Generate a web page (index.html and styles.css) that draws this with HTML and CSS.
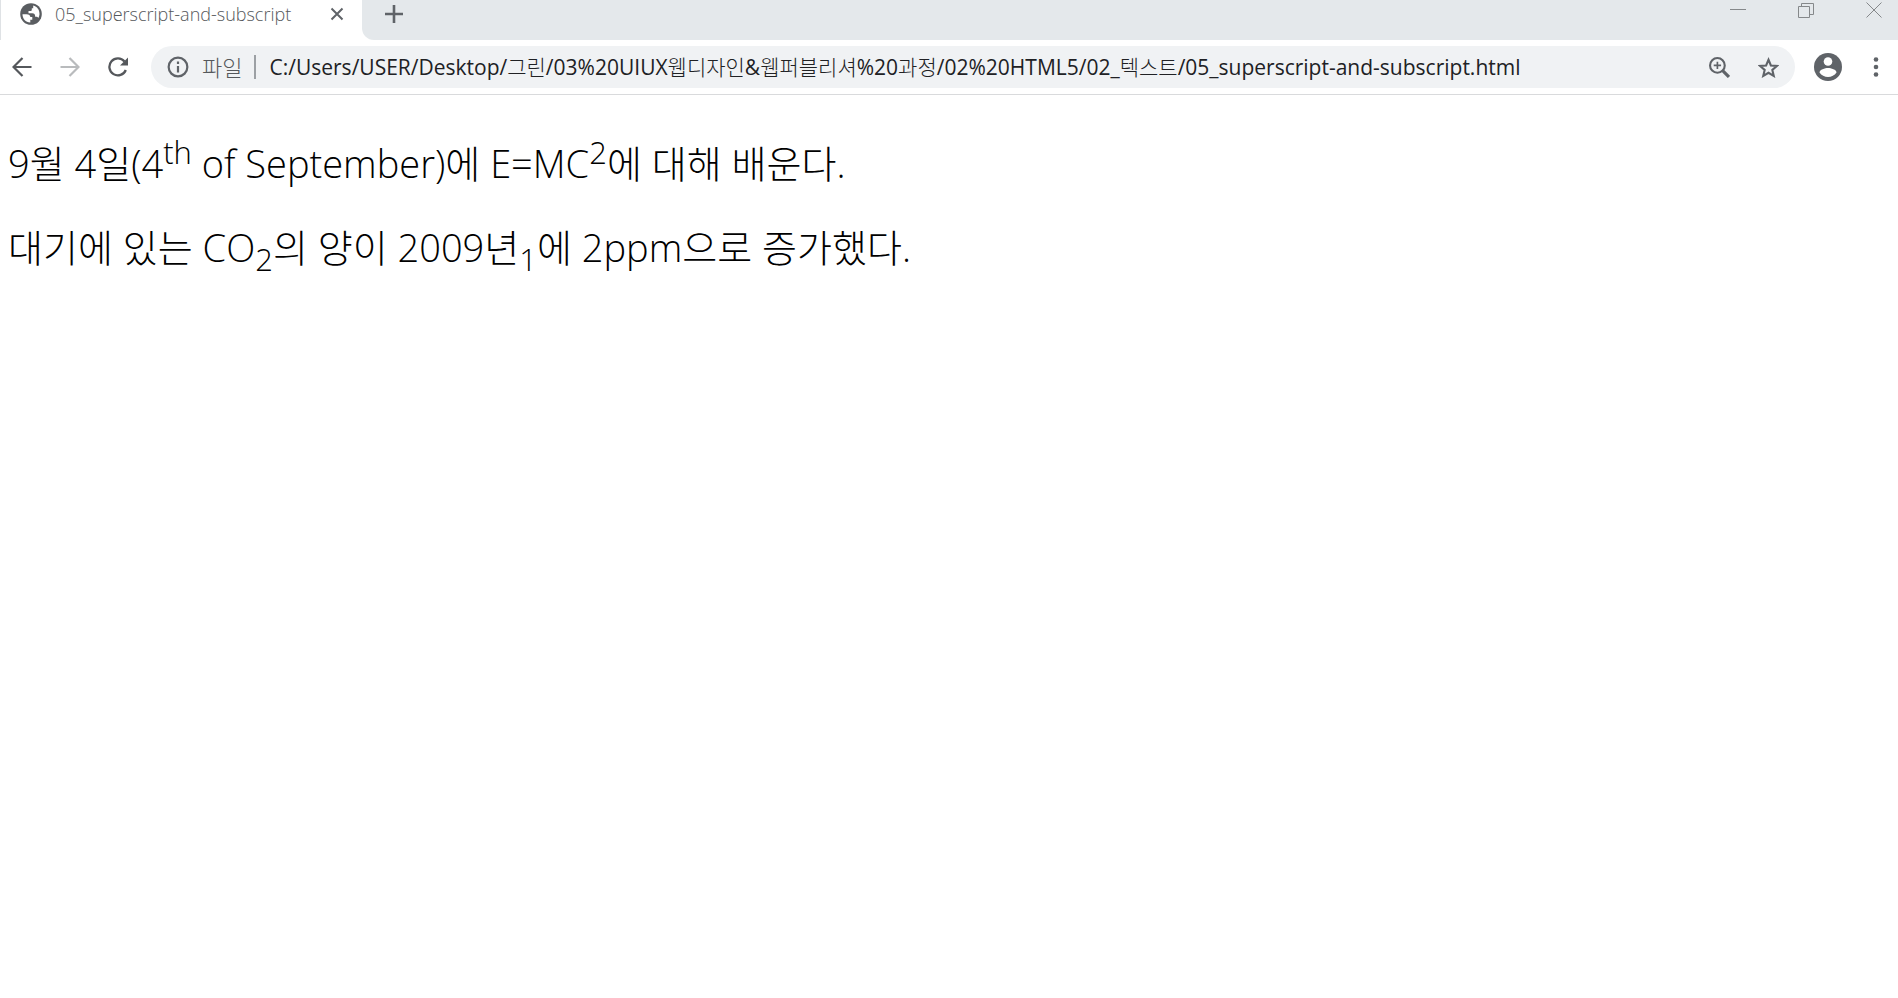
FILE: index.html
```html
<!DOCTYPE html>
<html lang="ko">
<head>
<meta charset="utf-8">
<title>05_superscript-and-subscript</title>
<link rel="stylesheet" href="styles.css">
</head>
<body>
<header class="browser">
  <div class="tab-strip">
    <div class="tab">
      <svg class="icon-globe" viewBox="0 0 22 22" aria-hidden="true"><circle cx="11" cy="11" r="10.800" fill="#5a5d61"/><path d="M2.500 11.200h4c2.500 0 3.800 1 3.800 2.900h2v2.600h-2v2.800C5.500 19.200 2.500 15.500 2.500 11.200z" fill="#fff"/><path d="M13.200 2.500c4 1 6.500 4.500 6.300 8.700-.1 1.500-.5 2.800-1.200 3.900-.4-.9-1-1.400-2.100-1.400h-1c0-2.300-1-3.400-3-3.400H8.500V8h1.800c1 0 1.500-.5 1.500-1.500V5.300h1.400z" fill="#fff"/></svg>
      <span class="tab-title">05_superscript-and-subscript</span>
      <button class="tab-close" aria-label="탭 닫기"><svg viewBox="0 0 14 14"><path d="M1.500 1.500l11 11m0-11l-11 11" stroke="#5f6368" stroke-width="2" fill="none"/></svg></button>
    </div>
    <div class="strip-rest">
      <button class="new-tab" aria-label="새 탭"><svg viewBox="0 0 18 18"><path d="M9 0v18M0 9h18" stroke="#5f6368" stroke-width="2.600" fill="none"/></svg></button>
      <div class="window-controls">
        <button aria-label="최소화"><svg viewBox="0 0 16 16"><path d="M0 7.500h16" stroke="#85888a" fill="none"/></svg></button>
        <button aria-label="이전 크기로"><svg viewBox="0 0 16 16"><path d="M.5 4.500h11v11H.5zM3.500 4.500v-3h12v11h-4" stroke="#85888a" fill="none"/></svg></button>
        <button aria-label="닫기"><svg viewBox="0 0 16 16"><path d="M.5 .5l15 15m0-15l-15 15" stroke="#85888a" fill="none"/></svg></button>
      </div>
    </div>
  </div>
  <div class="toolbar">
    <nav class="nav">
      <button aria-label="뒤로"><svg viewBox="0 0 20 20"><path d="M19.500 10H2M10.500 1L1.500 10l9 9" stroke="#55585c" stroke-width="2.200" fill="none"/></svg></button>
      <button aria-label="앞으로"><svg viewBox="0 0 20 20"><path d="M.5 10H18M9.500 1l9 9-9 9" stroke="#b9bbbd" stroke-width="2.200" fill="none"/></svg></button>
      <button aria-label="새로고침"><svg viewBox="0 0 20 20"><path d="M17.800 13A8.500 8.500 0 1 1 16.500 4.500" stroke="#55585c" stroke-width="2.300" fill="none"/><path d="M20 .5V8.500H12z" fill="#55585c"/></svg></button>
    </nav>
    <div class="omnibox">
      <svg class="icon-info" viewBox="0 0 20 20" aria-hidden="true"><circle cx="10" cy="10" r="8.500" stroke="#5f6368" stroke-width="2" fill="none"/><path d="M10 9v6M10 5v2.200" stroke="#5f6368" stroke-width="2"/></svg>
      <label class="scheme" for="url">파일</label>
      <input class="url" id="url" type="text" value="C:/Users/USER/Desktop/그린/03%20UIUX웹디자인&amp;웹퍼블리셔%20과정/02%20HTML5/02_텍스트/05_superscript-and-subscript.html">
      <button class="box-button" aria-label="확대/축소"><svg viewBox="0 0 20 20"><circle cx="8" cy="8" r="7" stroke="#5f6368" stroke-width="2" fill="none"/><path d="M4.500 8h7M8 4.500v7" stroke="#5f6368" stroke-width="1.600"/><path d="M13 13l6 6" stroke="#5f6368" stroke-width="3"/></svg></button>
      <button class="box-button" aria-label="북마크"><svg viewBox="0 0 22 21"><path d="M11 2.400l2.500 6 6.300.5-4.800 4.200 1.500 6.200L11 16l-5.500 3.300L7 13.100 2.200 8.900l6.300-.5z" stroke="#5f6368" stroke-width="2.200" fill="none"/></svg></button>
    </div>
    <button class="profile" aria-label="프로필"><svg viewBox="0 0 28 28"><circle cx="14" cy="14" r="14" fill="#5f6368"/><circle cx="14" cy="8.500" r="4.300" fill="#fff"/><path d="M5.500 19.500c0-3 5.500-4.500 8.500-4.500s8.500 1.500 8.500 4.500c-2 2.800-5 4.500-8.500 4.500s-6.500-1.700-8.500-4.500z" fill="#fff"/></svg></button>
    <button class="menu" aria-label="메뉴"><svg viewBox="0 0 6 20"><g fill="#5f6368"><circle cx="3" cy="2.500" r="2.300"/><circle cx="3" cy="10" r="2.300"/><circle cx="3" cy="17.500" r="2.300"/></g></svg></button>
  </div>
</header>
<main class="page">
  <p>9월 4일(4<sup>th</sup> of September)에 E=MC<sup>2</sup>에 대해 배운다.</p>
  <p>대기에 있는 CO<sub>2</sub>의 양이 2009년<sub>1</sub>에 2ppm으로 증가했다.</p>
</main>
</body>
</html>
```

FILE: styles.css
```css
* { box-sizing: border-box; }
body { margin: 0; background: #fff; color: #000; font-family: "Open Sans", "Noto Sans CJK KR Light", "Noto Sans CJK KR", sans-serif; }
button { display: flex; align-items: center; justify-content: center; padding: 0; border: 0; background: none; }
svg { display: block; flex: none; }

.browser { border-bottom: 1px solid #d9dadc; }
.tab-strip { display: flex; height: 40px; background: #fff; }
.tab { display: flex; align-items: center; width: 362px; padding: 0 18px 12px 19px; border-left: 1px solid #dfe2e5; }
.icon-globe { width: 22px; height: 22px; }
.tab-title { flex: 1; margin-left: 13px; color: #55585b; font-size: 18px; line-height: 24px; font-weight: 300; white-space: nowrap; }
.tab-close svg { width: 14px; height: 14px; }
.strip-rest { display: flex; flex: 1; justify-content: space-between; padding-bottom: 12px; background: #e4e8eb; border-bottom-left-radius: 12px; }
.new-tab { width: 64px; }
.new-tab svg { width: 18px; height: 18px; }
.window-controls { display: flex; gap: 52px; padding: 2px 16px 0 0; align-items: flex-start; }
.window-controls svg { width: 16px; height: 16px; }

.toolbar { display: flex; align-items: center; padding: 6px 19px 6px 12px; }
.nav { display: flex; gap: 28px; margin-right: 23px; }
.nav svg { width: 20px; height: 20px; }
.omnibox { display: flex; flex: 1; align-items: center; height: 42px; padding: 0 16px; border-radius: 21px; background: #f0f2f4; }
.icon-info { width: 22px; height: 22px; }
.scheme { margin-left: 13px; padding-right: 12px; border-right: 2px solid #9ca0a4; color: #55585b; font-size: 22px; line-height: 24px; font-weight: 300; }
.url { flex: 1; min-width: 0; margin-left: 13px; padding: 0; border: 0; background: none; color: #202124; font-family: inherit; font-size: 21px; line-height: 28px; }
.box-button { margin-left: 28px; }
.box-button svg { width: 21px; height: 21px; }
.profile { margin-left: 19px; }
.profile svg { width: 28px; height: 28px; }
.menu { margin-left: 31px; }
.menu svg { width: 6px; height: 20px; }

.page { padding: 8px; font-size: 38px; line-height: 48px; font-weight: 300; }
.page p { margin: 36px 0; }
.page sup, .page sub { font-size: 31px; line-height: 0; }
```
